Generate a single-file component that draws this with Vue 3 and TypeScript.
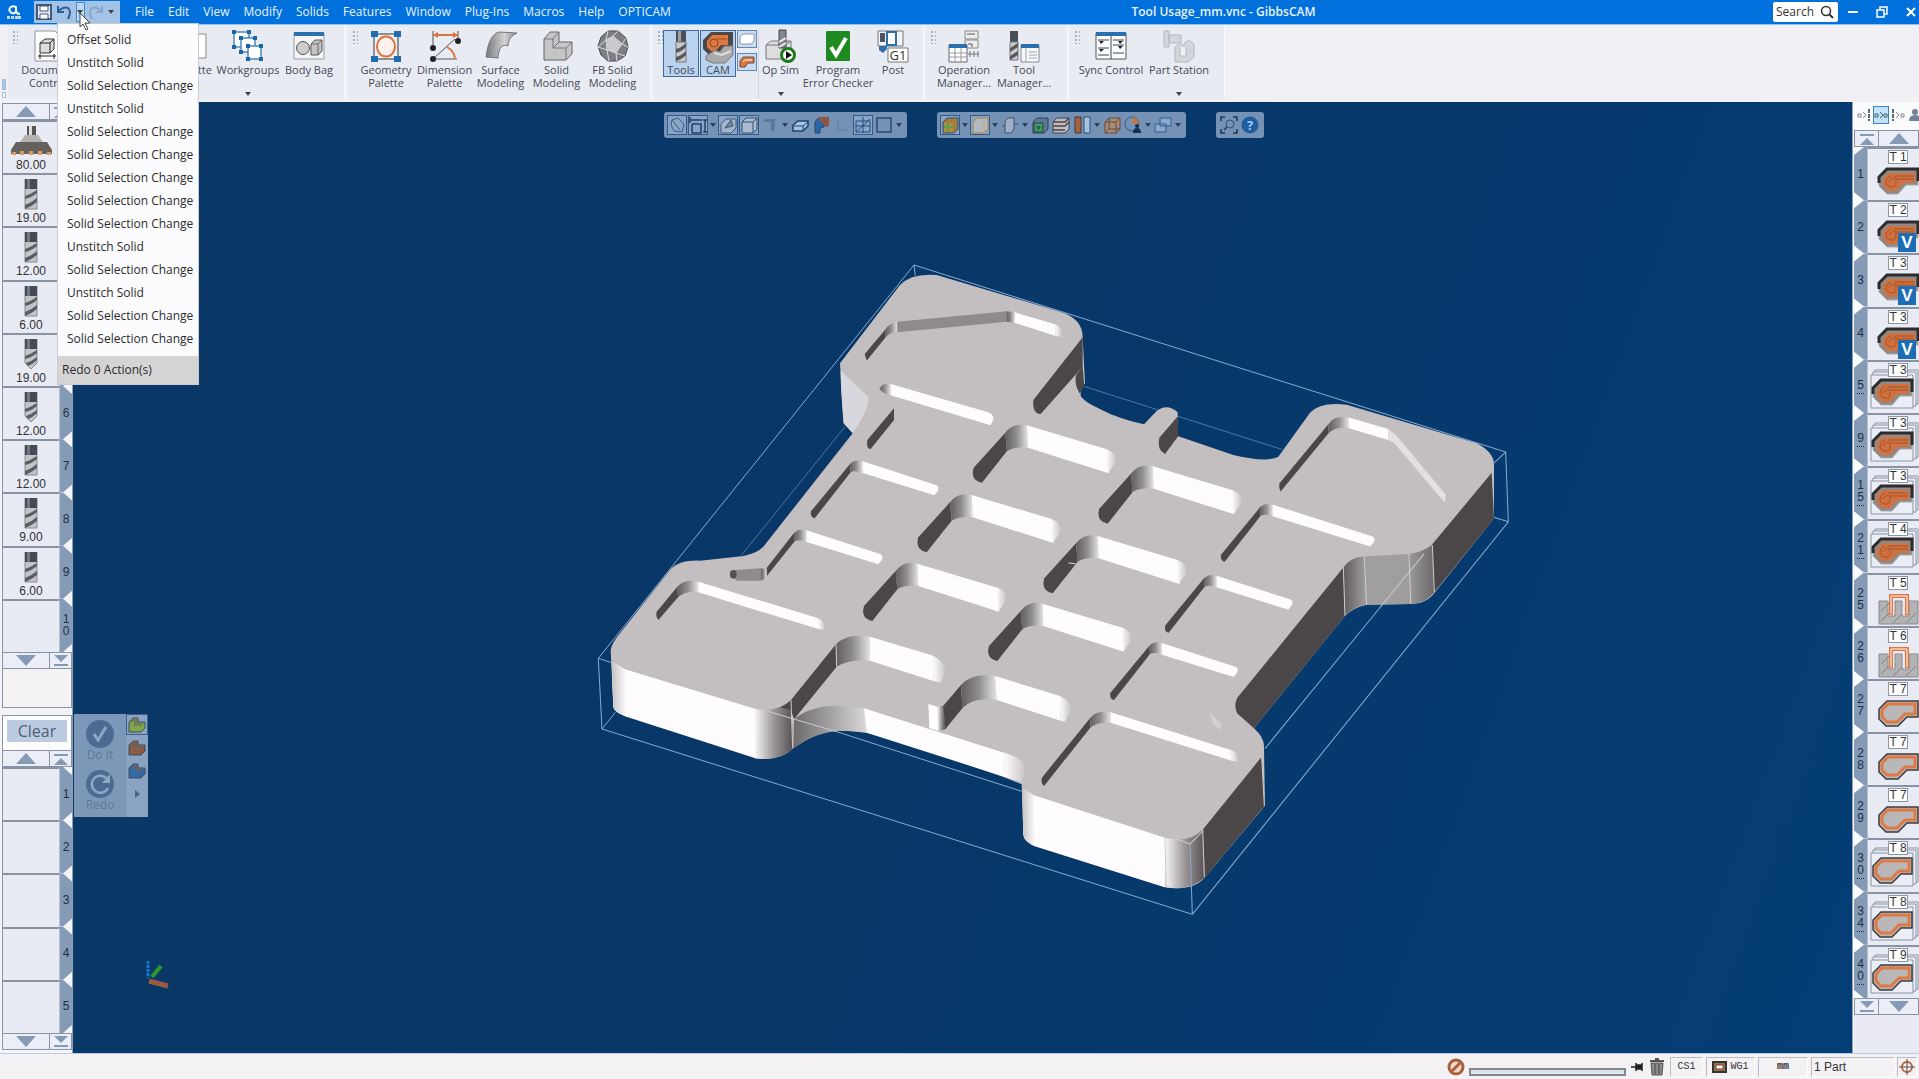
<script setup lang="ts">
import { ref } from 'vue'

interface RibbonItem { label: string; icon: string; width: number; drop?: boolean; active?: boolean; dim?: boolean }
interface Operation { num: string; tool: string; kind: 'pocket' | 'thread' | 'contour'; stacked?: boolean; badge?: boolean; more?: boolean }
interface MiniItem { icon: string; framed?: boolean; drop?: boolean }

const menus = ['File', 'Edit', 'View', 'Modify', 'Solids', 'Features', 'Window', 'Plug-Ins', 'Macros', 'Help', 'OPTICAM']
const U = 'Unstitch Solid'
const S = 'Solid Selection Change'
const history = ['Offset Solid', U, S, U, S, S, S, S, S, U, S, U, S, S]
const query = ref('')

const icons: Record<string, string> = {
  document: '<path d="M3 1h20l6 6v24H3z" fill="#fff" stroke="#8d9299"/><path d="M8 13l5-4h9v10l-4 4H8z" fill="#ddd" stroke="#333"/><path d="M8 13h10v10M18 13l4-4M6 26h18M8 24v5M22 24v5" fill="none" stroke="#222"/>',
  palette: '<path d="M2 4h26v24H2z" fill="#fff" stroke="#888"/>',
  workgroups: '<g fill="#fff" stroke="#4b89bd" stroke-width="1.5"><path d="M2 2h15v15H2z"/><path d="M9 8h14v14H9z"/><path d="M16 16h13v13H16z"/></g><g fill="#1c66a6"><path d="M0 0h4v4H0zM15 0h4v4h-4zM0 15h4v4H0zM7 6h4v4H7zM21 6h4v4h-4zM7 20h4v4H7zM14 14h4v4h-4zM27 14h4v4h-4zM14 27h4v4h-4zM27 27h4v4h-4z"/></g>',
  bag: '<path d="M1 3h30v26H1z" fill="#f5f5f7" stroke="#9a9ca2"/><path d="M1 2h30v4H1z" fill="#2a6fae"/><circle cx="10" cy="18" r="6.500" fill="#ccc" stroke="#555"/><path d="M18 14l4-4h7v11l-4 4h-7z" fill="#c4c4c6" stroke="#555"/><path d="M18 14h7v11M25 14l4-4" fill="none" stroke="#666"/>',
  geometry: '<path d="M4 4h24v25H4z" fill="#e9f1fa" stroke="#333"/><path d="M1 1h7v6H1zM24 1h7v6h-7zM1 26h7v6H1zM24 26h7v6h-7z" fill="#1f6cb0"/><ellipse cx="16" cy="16.500" rx="9" ry="10" fill="#fdf3ee" stroke="#e0713a" stroke-width="2"/>',
  dimension: '<path d="M4 1v14M29 1v8M4 29h24M4 29L26 9" fill="none" stroke="#555"/><path d="M4 5h25" stroke="#df733c" stroke-width="2"/><path d="M4 5l5-3v6zM29 5l-5-3v6z" fill="#df733c"/><path d="M18 17q7 4 8 11" fill="none" stroke="#df733c" stroke-width="2"/><g fill="#222"><circle cx="4" cy="18" r="3"/><circle cx="4" cy="29" r="3"/><circle cx="29" cy="11" r="3"/></g>',
  surface: '<path d="M1 27C3 12 7 4 14 2l18 1c-6 3-9 7-9 13-2-1-5-1-7 1-2 3-3 7-3 11z" fill="url(#metal)" stroke="#77787c"/>',
  solid: '<path d="M3 9l6-7h9v10h13v12l-6 6H3z" fill="#c5c5c7" stroke="#66676a"/><path d="M3 9h9v9h13v12M12 9l6-7M12 18l6-6M25 18l6-6" fill="none" stroke="#77787c"/>',
  facet: '<path d="M11 1h10l8 7 2 9-3 9-8 5h-9l-7-6-3-9 3-9z" fill="#7d7f83" stroke="#4a4b4d"/><path d="M11 1l-2 9-8 7 9 3 2 11M9 10l7-4 5-5M9 10l1 10 9 3 6-9-9-8M25 14l6 3M19 23l1 8M19 23l9 3M25 14l4-6" fill="none" stroke="#ddd"/><path d="M16 6l9 8-6 9-9-3-1-10z" fill="#c9cacd"/>',
  mill: '<path d="M11 0h10v11H11z" fill="#4a4f56"/><path d="M13 0h3v11h-3z" fill="#9da1a8"/><path d="M11 11h10v20H11z" fill="#c9c9cc" stroke="#777"/><path d="M11 18q5-1 10-6v4q-5 5-10 6zM11 26q5-1 10-6v4q-5 5-10 6z" fill="#55585d"/>',
  cam: '<path d="M1 9L9 1H31V17H21L14 24H7L1 18Z" fill="#4d4745"/><path d="M5 10L10 4H26V14H19L13 20H9L5 16Z" fill="#dc7840"/><circle cx="12" cy="12" r="4" fill="none" stroke="#8c4522"/><path d="M15 8H25" stroke="#9c5028"/><path d="M4 25l9-6 5 2 4-6h9v9l-8 8H11l-7-3z" fill="#a9a9ab" stroke="#77787a"/><path d="M12 22l8 2 9-4" fill="none" stroke="#dedede" stroke-width="2"/>',
  opsim: '<path d="M1 15l5-4h20v12l-6 6H1z" fill="#ddd" stroke="#777"/><path d="M1 15h19v14M20 15l6-4" fill="none" stroke="#777"/><path d="M14 0h7v18h-7z" fill="#85888d" stroke="#44474b"/><path d="M14 12l7-4M14 17l7-4" stroke="#eee" stroke-width="2"/><circle cx="23" cy="25" r="6.500" fill="#fff" stroke="#1d7a1d" stroke-width="3"/><path d="M21 21l6 4-6 4z" fill="#111"/>',
  check: '<path d="M5 2h22v28H5z" fill="#1f8a22" stroke="#1f8a22" stroke-width="2" stroke-linejoin="round"/><path d="M9 17l5 8L24 8" fill="none" stroke="#fff" stroke-width="4"/>',
  post: '<path d="M1 1h25v15H1z" fill="#f4f4f6" stroke="#777"/><path d="M3 3h5v9H3z" fill="#4a5665"/><path d="M10 2h9v13h-9z" fill="#fff" stroke="#2a6fae" stroke-width="2"/><path d="M2 16h8v3l-4 4-4-3z" fill="#2a6fae"/><path d="M11 18h20v14H11z" fill="#fff" stroke="#777"/><text x="21" y="30" text-anchor="middle" font-size="13" fill="#333">G1</text>',
  opman: '<path d="M17 1h13v8H17zM17 10h13v8H17z" fill="#eee" stroke="#888"/><path d="M19 4h8M20 14h4v3" fill="none" stroke="#555"/><path d="M1 15h18v17H1z" fill="#fff" stroke="#667"/><path d="M1 14h18v4H1z" fill="#2a6fae"/><path d="M1 23h18M1 27h18M7 18v14M13 18v14" stroke="#999"/><path d="M20 24h11M22 21v6M26 21v6M30 21v6" stroke="#777"/>',
  toolman: '<path d="M2 1h8v11H2z" fill="#4a4f56"/><path d="M2 12h8v18H2z" fill="#ccc" stroke="#777"/><path d="M2 18l8-5v4l-8 5zM2 26l8-5v4l-8 5z" fill="#55585d"/><path d="M13 15h18v17H13z" fill="#f7f7f9" stroke="#889"/><path d="M13 14h18v4H13z" fill="#2a6fae"/><path d="M18 18v14M21 22h8M21 25h8M21 28h8" stroke="#9aa"/>',
  sync: '<path d="M1 3h30v26H1z" fill="#fff" stroke="#555"/><path d="M1 2h30v4H1z" fill="#2a6fae"/><path d="M16 6v23M3 10h11M18 10h11M3 18h11M18 23h11M3 25h11M18 15h11" stroke="#345"/><path d="M4 11h5l-3 3zM23 11h5l-3 3zM4 19h5l-3 3zM23 16h5l-3 3z" fill="#223"/>',
  station: '<g fill="#d2d3d8" stroke="#b2b4ba"><path d="M1 1h5v16H1zM6 5h12v8H6z"/><path d="M12 17l5-4 4 3v-3l5-3 5 4v13l-6 5H12z"/></g><path d="M17 17v9h6v-9" fill="#f2f2f5" stroke="#b2b4ba"/>',
  save: '<path d="M1 1h14v14H1z" fill="#dfeaf6" stroke="#44597a" stroke-width="2"/><path d="M4 2h8v5H4zM4 10h8v5H4z" fill="#fff" stroke="#44597a"/>',
  undo: '<path d="M2 2v6h6M2 8q5-6 10-4 4 3 0 11" fill="none" stroke="#2d5f9b" stroke-width="2"/>',
  redo: '<path d="M14 2v6H8M14 8Q9 2 4 4q-4 3 0 11" fill="none" stroke="#8aa6c6" stroke-width="2"/>',
  wire: '<path d="M4 4l6-2 6 6-2 8-8-1-3-6z" fill="#8aa7c6" stroke="#3a5f8a"/><path d="M4 4l8 10" stroke="#3a5f8a"/>',
  size: '<path d="M1 4h12M1 1v6M3 8v9M3 8h9v9H3M16 4v12M14 4h4M14 16h4" fill="none" stroke="#1f3f66" stroke-width="1.500"/>',
  boxa: '<path d="M2 8l5-5h10v9l-5 5H2z" fill="#a3b5cb" stroke="#3e5672"/><path d="M6 12l6-8 2 6z" fill="#7188a5" stroke="#3e5672"/>',
  cube: '<path d="M2 6l4-4h11v11l-4 4H2z" fill="#a9bbd0" stroke="#34506f"/><path d="M2 6h11v11M13 6l4-4" fill="none" stroke="#34506f"/>',
  edge: '<path d="M3 4l3-1h8l-1 13-3-2V6H3z" fill="#5c7795"/>',
  plane: '<path d="M2 9l5-4h10v5l-5 5H2z" fill="#a7c3e2" stroke="#1d4470" stroke-width="1.500"/><path d="M2 10h10l5-4M12 10v5" fill="none" stroke="#1d4470"/>',
  curve: '<path d="M3 17V7q1-5 6-5h3v9l-4 1v5z" fill="#2766a8" stroke="#24486f"/><path d="M7 1h10v9l-4 1-2-4-4-2z" fill="#8f5541"/>',
  angle: '<path d="M5 3v11h9" fill="none" stroke="#58789d"/>',
  grid: '<path d="M2 5h14v11H2z" fill="none" stroke="#1f4a7b"/><path d="M2 16L16 3M9 1v16M2 10h14" stroke="#1f4a7b"/>',
  frame: '<path d="M2 2h14v14H2z" fill="none" stroke="#2b4a70" stroke-width="1.500"/>',
  render: '<path d="M2 6l4-4h11v11l-4 4H2z" fill="#a27d3e" stroke="#33506f"/><path d="M3 7h9v9H3z" fill="#b38b48"/><path d="M7 7v9M3 11h9" stroke="#5da040" stroke-width="2"/>',
  pale: '<path d="M2 6l4-4h11v11l-4 4H2z" fill="#b2bac2" stroke="#b0906a" stroke-width="1.500"/><path d="M13 6v11" stroke="#c8a26f"/>',
  cyl: '<path d="M4 5l3-3h6v11l-3 4H4z" fill="#9eb0c6" stroke="#3d5370"/><path d="M1 10h3M13 8h4" stroke="#3d5370"/>',
  green: '<path d="M2 6l4-4h11v11l-4 4H2z" fill="#5d7892" stroke="#24405f"/><path d="M3 7h9v9H3z" fill="#42a04a" stroke="#24405f"/><circle cx="7.500" cy="11.500" r="2" fill="#2d5b80"/>',
  layers: '<path d="M1 6l4-4h12v11l-4 4H1z" fill="#b9bdc5" stroke="#34465c"/><path d="M1 6h12l4-4M1 10h12l4-4M1 14h12" stroke="#5a4038" stroke-width="1.500" fill="none"/>',
  split: '<path d="M2 1h6v16H2z" fill="#a8623e" stroke="#3f3a40"/><path d="M11 1h6v16h-6z" fill="#a7c2de" stroke="#2c5078"/>',
  wirebox: '<path d="M2 6l4-4h11v11l-4 4H2zM2 6h11v11M13 6l4-4M6 2v11h11M2 17l4-4" fill="#a98a72" stroke="#6a4c3c"/>',
  pie: '<circle cx="8" cy="8" r="7" fill="#6f93bb" stroke="#48566a"/><path d="M8 8V1a7 7 0 0 1 7 7z" fill="#b87a4e"/><circle cx="13" cy="10" r="2" fill="#15304f"/><path d="M9 17q0-5 4-5t4 5z" fill="#15304f"/>',
  windows: '<path d="M6 2h11v8H6zM1 8h11v8H1z" fill="#8ba9cb" stroke="#2d5d92"/>',
  fit: '<path d="M1 5V1h4M13 1h4v4M17 13v4h-4M5 17H1v-4" fill="none" stroke="#1d3654" stroke-width="1.500"/><circle cx="10" cy="8" r="4" fill="none" stroke="#34506f"/><path d="M7 11l-3 3" stroke="#34506f" stroke-width="2"/>',
  help: '<circle cx="9" cy="9" r="8.500" fill="#1c5c9f"/><text x="9" y="14" text-anchor="middle" font-size="13" font-weight="bold" fill="#a9cdf2">?</text>',
  facemill: '<path d="M16 0h9v9h-9z" fill="#555"/><path d="M18 0h3v9h-3z" fill="#ddd"/><path d="M14 9h13l5 7H9z" fill="#b5b3b2"/><path d="M5 16h31l5 8v4H0v-4z" fill="#66615f"/><path d="M1 26h4v3H1zM9 25h4v4H9zM18 25h4v4h-4zM27 25h4v4h-4zM36 26h4v3h-4z" fill="#d89b62"/>',
}

const groups: { lead: number; width: number; items: RibbonItem[] }[] = [
  { lead: 8, width: 337, items: [
    { label: 'Document Control', icon: 'document', width: 64 }, { label: '', icon: 'palette', width: 93 },
    { label: 'Palette', icon: 'palette', width: 38 }, { label: 'Workgroups', icon: 'workgroups', width: 68, drop: true }, { label: 'Body Bag', icon: 'bag', width: 52 } ] },
  { lead: 8, width: 303, items: [
    { label: 'Geometry Palette', icon: 'geometry', width: 60 }, { label: 'Dimension Palette', icon: 'dimension', width: 55 },
    { label: 'Surface Modeling', icon: 'surface', width: 55 }, { label: 'Solid Modeling', icon: 'solid', width: 55 }, { label: 'FB Solid Modeling', icon: 'facet', width: 55 } ] },
  { lead: 10, width: 271, items: [
    { label: 'Tools', icon: 'mill', width: 36, active: true }, { label: 'CAM', icon: 'cam', width: 36, active: true },
    { label: 'Op Sim', icon: 'opsim', width: 43, drop: true }, { label: 'Program\nError Checker', icon: 'check', width: 70 }, { label: 'Post', icon: 'post', width: 38 } ] },
  { lead: 6, width: 142, items: [
    { label: 'Operation Manager...', icon: 'opman', width: 64 }, { label: 'Tool Manager...', icon: 'toolman', width: 54 } ] },
  { lead: 6, width: 155, items: [
    { label: 'Sync Control', icon: 'sync', width: 70 }, { label: 'Part Station', icon: 'station', width: 64, drop: true, dim: true } ] },
]

const bars: MiniItem[][] = [
  [{ icon: 'wire', framed: true }, { icon: 'size', framed: true, drop: true }, { icon: 'boxa', framed: true }, { icon: 'cube', framed: true }, { icon: 'edge', drop: true },
    { icon: 'plane' }, { icon: 'curve' }, { icon: 'angle' }, { icon: 'grid', framed: true }, { icon: 'frame', drop: true }],
  [{ icon: 'render', framed: true, drop: true }, { icon: 'pale', framed: true, drop: true }, { icon: 'cyl', drop: true }, { icon: 'green' }, { icon: 'layers' },
    { icon: 'split', drop: true }, { icon: 'wirebox' }, { icon: 'pie', drop: true }, { icon: 'windows', drop: true }],
  [{ icon: 'fit' }, { icon: 'help' }],
]

const tools = ['80.00', '19.00', '12.00', '6.00', '19.00', '12.00', '12.00', '9.00', '6.00', '']
const ops: Operation[] = [
  { num: '1', tool: 'T 1', kind: 'pocket' },
  { num: '2', tool: 'T 2', kind: 'pocket', badge: true },
  { num: '3', tool: 'T 3', kind: 'pocket', badge: true },
  { num: '4', tool: 'T 3', kind: 'pocket', badge: true },
  { num: '5', tool: 'T 3', kind: 'pocket', stacked: true, more: true },
  { num: '9', tool: 'T 3', kind: 'pocket', stacked: true, more: true },
  { num: '15', tool: 'T 3', kind: 'pocket', stacked: true, more: true },
  { num: '21', tool: 'T 4', kind: 'pocket', stacked: true, more: true },
  { num: '25', tool: 'T 5', kind: 'thread' },
  { num: '26', tool: 'T 6', kind: 'thread' },
  { num: '27', tool: 'T 7', kind: 'contour' },
  { num: '28', tool: 'T 7', kind: 'contour' },
  { num: '29', tool: 'T 7', kind: 'contour' },
  { num: '30', tool: 'T 8', kind: 'contour', stacked: true, more: true },
  { num: '34', tool: 'T 8', kind: 'contour', stacked: true, more: true },
  { num: '40', tool: 'T 9', kind: 'contour', stacked: true, more: true },
]

const bigPockets = [[1246, 548], [1080, 757], [917, 963], [1623, 671], [1458, 880], [1292, 1083]]
const slimPockets = [[780, 642, 0], [612, 849, 0], [1842, 985, 0], [1678, 1187, 0], [2010, 772, 78]]
</script>

<template>
  <div class="app">
    <header class="titlebar">
      <svg class="logo" viewBox="0 0 16 16"><path d="M10 6V3Q6 1 4 4t2 5q4 1 4-3 0 4 4 4" fill="none" stroke="#fff" stroke-width="2" /><path d="M1 12h3v3H1zM5 12h3v3H5zM9 12h6v3H9z" fill="#bcd8f5" /></svg>
      <div class="quick">
        <button aria-label="Save"><svg viewBox="0 0 16 16" v-html="icons.save" /></button>
        <button aria-label="Undo"><svg viewBox="0 0 16 16" v-html="icons.undo" /></button>
        <button class="split" aria-label="Undo history"><i class="caret" /></button>
        <button aria-label="Redo"><svg viewBox="0 0 16 16" v-html="icons.redo" /></button>
        <button class="more" aria-label="Customize"><i class="caret" /></button>
      </div>
      <nav class="menus"><button v-for="m in menus" :key="m">{{ m }}</button></nav>
      <h1>Tool Usage_mm.vnc - GibbsCAM</h1>
      <label class="search">
        <input v-model="query" type="text" placeholder="Search" aria-label="Search" />
        <svg viewBox="0 0 14 14"><circle cx="6" cy="6" r="4.500" fill="none" stroke="#333" stroke-width="1.500" /><path d="M9 9l4 4" stroke="#333" stroke-width="2" /></svg>
      </label>
      <div class="winbtns">
        <button aria-label="Minimize"><svg viewBox="0 0 12 12"><path d="M1 6h10" stroke="#fff" stroke-width="2" /></svg></button>
        <button aria-label="Restore"><svg viewBox="0 0 12 12"><path d="M4 4V1h7v7H8M1 4h7v7H1z" fill="none" stroke="#fff" stroke-width="1.500" /></svg></button>
        <button aria-label="Close"><svg viewBox="0 0 12 12"><path d="M2 2l8 8M10 2l-8 8" stroke="#fff" stroke-width="2" /></svg></button>
      </div>
    </header>

    <section class="ribbon">
      <div class="edge"><span /><span /></div>
      <div v-for="(g, gi) in groups" :key="gi" class="group" :style="{ width: g.width + 'px', paddingLeft: g.lead + 'px' }">
        <i class="grip" />
        <template v-for="it in g.items" :key="it.label + it.width">
          <div v-if="it.label === 'Op Sim'" class="pair">
            <button aria-label="Part"><svg viewBox="0 0 18 14"><path d="M2 5l3-3h11v7l-3 3H2z" fill="#fff" stroke="#8d96a5" /></svg></button>
            <button aria-label="Process"><svg viewBox="0 0 18 14"><path d="M2 6l3-4h11v6h-6l-3 4H2z" fill="#dd7940" stroke="#6d4a3a" /><path d="M5 7l2-2h7" fill="none" stroke="#fff" /></svg></button>
          </div>
          <button class="item" :class="{ active: it.active, dim: it.dim }" :style="{ width: it.width + 'px' }">
            <svg viewBox="0 0 32 32" v-html="icons[it.icon]" />
            <span>{{ it.label }}</span>
            <i v-if="it.drop" class="caret" />
          </button>
        </template>
      </div>
    </section>

    <main class="work">
      <aside class="left">
        <div class="nav"><button aria-label="Up"><i class="tri up" /></button><button class="end" aria-label="First"><i class="tri up capped" /></button></div>
        <div class="tiles ten">
          <button v-for="(t, i) in tools" :key="i" class="tile">
            <span class="face">
              <svg v-if="i === 0" class="fm" viewBox="0 0 41 30" v-html="icons.facemill" />
              <svg v-else-if="t" class="tl" viewBox="0 0 16 31">
                <path v-if="i === 4 || i === 5" d="M2 0h12v24l-6 6-6-6z" fill="#c3c4c7" stroke="#8a8c90" />
                <path v-else d="M2 0h12v30H2z" fill="#c3c4c7" stroke="#8a8c90" />
                <path d="M2 0h12v10H2z" fill="#454b54" /><path d="M4 0h3v10H4z" fill="#737982" />
                <path d="M2 17q6-2 12-6v3q-6 5-12 6z" fill="#5a5d62" />
                <path v-if="i === 4 || i === 5" d="M3 24q6-2 11-6v3q-4 4-9 6z" fill="#5a5d62" />
                <path v-else d="M2 26q6-2 12-7v4q-6 5-12 7z" fill="#5a5d62" />
              </svg>
              <em>{{ t }}</em>
            </span>
            <span class="num"><b>{{ i + 1 }}</b></span>
          </button>
        </div>
        <div class="nav"><button aria-label="Down"><i class="tri down" /></button><button class="end" aria-label="Last"><i class="tri down capped" /></button></div>
        <div class="blank" />
        <div class="clear"><button>Clear</button></div>
        <div class="nav"><button aria-label="Up"><i class="tri up" /></button><button class="end" aria-label="First"><i class="tri up capped" /></button></div>
        <div class="tiles five">
          <button v-for="n in 5" :key="n" class="tile"><span class="face" /><span class="num"><b>{{ n }}</b></span></button>
        </div>
        <div class="nav"><button aria-label="Down"><i class="tri down" /></button><button class="end" aria-label="Last"><i class="tri down capped" /></button></div>
      </aside>

      <section class="viewport">
        <svg class="scene" viewBox="73 102 1779 951">
          <defs>
            <linearGradient id="metal"><stop offset="0" stop-color="#77787b" /><stop offset=".6" stop-color="#d2d2d4" /><stop offset="1" stop-color="#8b8c8f" /></linearGradient>
            <linearGradient id="fillet"><stop offset="0" stop-color="#625e5f" /><stop offset=".5" stop-color="#918e8f" /><stop offset="1" stop-color="#e4e2e3" /></linearGradient>
            <linearGradient id="round"><stop offset="0" stop-color="#fbf9fa" /><stop offset=".5" stop-color="#9b9798" /><stop offset="1" stop-color="#555152" /></linearGradient>
            <linearGradient id="pale"><stop offset="0" stop-color="#c5c1c2" /><stop offset="1" stop-color="#fefcfd" /></linearGradient>
            <linearGradient id="paleEnd"><stop offset="0" stop-color="#fefcfd" /><stop offset="1" stop-color="#c8c4c5" /></linearGradient>
            <linearGradient id="wave"><stop offset="0" stop-color="#5f5b5c" /><stop offset=".25" stop-color="#a19e9f" /><stop offset=".7" stop-color="#a09d9e" /><stop offset="1" stop-color="#6b6768" /></linearGradient>
            <linearGradient id="sweep"><stop offset="0" stop-color="#6d6a6b" /><stop offset="1" stop-color="#dad7d8" /></linearGradient>
          </defs>

          <g transform="translate(590 250) scale(.333333)">
            <path class="box" d="M972 45L2747 606M972 45l4 32M972 45L25 1225l11 212L1807 1993M36 1437l40-50" />
            <path class="box faint" d="M765 530L455 915M1485 410L2075 598" />
            <path class="top" d="M930 105Q965 68 1040 75L1410 185Q1478 205 1478 262L1485 400Q1465 420 1475 450L1560 492V1560H1250L830 1448 740 1440Q680 1445 610 1495 570 1535 495 1525L110 1400Q70 1385 70 1370L62 1200Q65 1180 90 1150L240 960Q265 930 330 932L460 918Q500 910 520 890L788 550 760 520 750 340Z" />
          </g>
          <g transform="translate(1000 370) scale(.333333 .357143)">
            <path class="top" d="M200-30L235 30 240 70C255 95 330 130 432 152L470 115Q500 92 533 118V185L700 238Q800 260 835 243L930 120Q960 88 1040 97L1430 205Q1482 230 1482 265V415L1305 622Q1280 655 1230 655L1100 657Q1060 665 1035 688L762 1003Q795 1030 792 1060L795 1220 615 1420Q580 1460 495 1448L110 1335Q70 1320 70 1300L65 1160 0 1136-400 1010-490 900V500L0-50Z" />
          </g>

          <g transform="translate(590 250) scale(.333333)">
            <path d="M752 362L835 440Q838 480 788 548L762 518Q752 430 752 362Z" fill="#d8d7de" />
            <path class="dark" d="M1478 262V350L1352 492Q1326 490 1330 450ZM1478 350L1483 412 1468 430Q1452 400 1458 375Z" />
            <path class="dark" d="M885 240L887 262 830 332 824 312ZM912 475V510L842 597Q828 597 832 570Z" />
            <path d="M885 240Q895 220 922 215V247Q900 246 887 262Z" fill="url(#fillet)" />
            <path d="M922 215L1250 184V215L922 247Z" fill="#8e8b8c" />
            <path d="M1250 184L1275 187V219L1250 215Z" fill="url(#fillet)" />
            <path class="white" d="M1275 187L1395 223 1397 258 1275 219Z" />
            <path d="M1395 223Q1420 232 1416 262L1397 258Z" fill="url(#paleEnd)" />
            <path d="M868 416Q880 395 902 402V434Q880 432 868 416Z" fill="url(#fillet)" />
            <path class="white" d="M902 402L1195 487Q1212 495 1210 508L1202 526 902 436Z" />

            <g v-for="(p, i) in bigPockets" :key="'b' + i" :transform="`translate(${p[0]} ${p[1]})`">
              <path class="dark" d="M0 0L-95 105Q-106 142-70 150L5 55Z" />
              <path d="M0 0Q25-32 65-22L68 45Q30 40 5 55Z" fill="url(#fillet)" />
              <path class="white" d="M65-22L305 50 310 122 68 45Z" />
              <path d="M302 49Q335 60 332 88L308 122Z" fill="url(#paleEnd)" />
            </g>
            <g v-for="(p, i) in slimPockets" :key="'s' + i" :transform="`translate(${p[0]} ${p[1]})`">
              <path v-if="i !== 1" class="dark" d="M0 0L-117 142Q-120 160-106 163L2 25Z" />
              <path v-else class="dark" d="M0 0L-82 105V130L2 25Z" />
              <path d="M0 0Q15-15 38-8V27Q15 18 2 25Z" fill="url(#fillet)" />
              <path class="white" :d="`M38-8L${258 + p[2]} ${63 + p[2] * 0.3}q12 5 5 18l-10 13L38 27Z`" />
            </g>
            <path d="M420 972Q422 960 440 960L512 955V992L440 992Z" fill="#8f8c8d" /><path d="M512 955L530 958V985L512 992Z" fill="url(#fillet)" />
            <ellipse cx="430" cy="973" rx="10" ry="13" fill="#555152" />

            <path class="dark" d="M262 1010L264 1042 205 1110Q196 1098 200 1085Z" />
            <path d="M262 1010Q285 985 325 995V1027Q285 1022 264 1042Z" fill="url(#fillet)" />
            <path class="white" d="M325 995L685 1105 688 1138 325 1027Z" />
            <path d="M685 1105Q705 1115 705 1140L688 1138Z" fill="url(#paleEnd)" />

            <path class="white" d="M65 1235L105 1258 500 1378V1525L110 1400Q70 1385 70 1370Z" />
            <path d="M65 1235L105 1258 110 1400Q70 1385 70 1370Z" fill="url(#pale)" />
            <path d="M492 1376Q560 1390 603 1350L610 1495Q570 1535 495 1525Z" fill="url(#round)" />
            <path class="dark" d="M570 1372Q590 1365 603 1350L738 1183 740 1250 612 1408 603 1380Z" />
            <path d="M738 1183Q770 1148 840 1160V1232Q780 1225 740 1250Z" fill="url(#fillet)" />
            <path class="white" d="M840 1160L1030 1217V1293L840 1232Z" />
            <path d="M1030 1217Q1065 1235 1067 1270L1050 1298 1030 1293Z" fill="url(#paleEnd)" />
            <path d="M612 1408Q680 1350 822 1375L830 1448Q700 1425 610 1495Z" fill="url(#sweep)" />
            <path class="white" d="M822 1375L1242 1508 1245 1581 830 1448Z" />
            <path d="M1242 1508Q1300 1525 1307 1555L1295 1597 1245 1581Z" fill="url(#paleEnd)" />
            <path class="top" d="M1000 1370L1240 1380V1470L1060 1442 1018 1432Z" />
            <path class="white" d="M1015 1362L1042 1370 1045 1442 1018 1435Z" />
            <path d="M1042 1370L1062 1367 1066 1438 1045 1444Z" fill="url(#round)" />
            <path class="dark" d="M1060 1367L1113 1305 1117 1375 1066 1438Z" />
            <path d="M1113 1305Q1145 1268 1215 1278L1220 1350Q1150 1340 1117 1375Z" fill="url(#fillet)" />
            <path class="white" d="M1215 1278L1410 1338 1412 1412 1220 1350Z" />
            <path d="M1410 1338Q1445 1355 1443 1380L1425 1416 1412 1412Z" fill="url(#paleEnd)" />
            <path class="ridge" d="M603 1350L608 1495M530 1383L740 1445M738 1183L740 1250" />
            <path class="box" d="M25 1225L65 1238M740 1445L1295 1624" />
          </g>

          <g transform="translate(1000 370) scale(.333333 .357143)">
            <path class="dark" d="M533 130L535 185 495 235Q470 225 478 190Z" />
            <path class="dark" d="M985 152V178L842 340Q836 330 838 318Z" />
            <path d="M985 152Q1005 125 1047 133V163Q1005 158 985 178Z" fill="url(#fillet)" />
            <path class="white" d="M1047 133L1165 165V196L1047 163Z" />
            <path d="M1165 165L1188 182 1338 350 1334 372 1182 204 1165 196Z" fill="#e3e0e2" />
            <path class="dark" d="M270 975L272 1000 132 1165Q120 1155 127 1140Z" />
            <path d="M270 975Q290 950 332 958V988Q295 985 272 1000Z" fill="url(#fillet)" />
            <path class="white" d="M332 958L690 1063 695 1094 332 988Z" />
            <path d="M690 1063Q718 1070 715 1098L695 1094Z" fill="url(#paleEnd)" />
            <path d="M628 958L665 992 660 1008 638 992Z" fill="#d3cfd1" />

            <path class="dark" d="M1030 553L1035 688 762 1003 712 962Q700 940 712 918Z" />
            <path d="M1030 553Q1050 525 1090 522L1225 515Q1270 510 1295 490L1303 622Q1275 655 1230 655L1100 657Q1060 662 1035 688Z" fill="url(#wave)" />
            <path class="dark" d="M1295 490L1475 288 1482 415 1303 622Z" />
            <path class="white" d="M68 1172L100 1190 495 1310V1448L110 1335Q70 1320 70 1300Z" />
            <path d="M66 1170L100 1190 106 1335Q70 1320 70 1300Z" fill="url(#pale)" />
            <path d="M493 1310Q570 1325 608 1287L615 1420Q570 1460 498 1448Z" fill="url(#round)" />
            <path class="dark" d="M608 1287L785 1083 794 1220 615 1420Z" />
            <path class="ridge" d="M1030 553L1035 688M1093 522L1100 657M1227 515L1232 655M1297 490L1303 622M608 1287L613 1420M495 1310L499 1448M785 1083L793 1220M206 540L228 543" />
            <path class="box" d="M577 1524L1525 425 1517 230 1480 262M570 1325L577 1524M795 1060L1140 665M1482 412L1525 425" />
            <path class="ridge" d="M1140 665L1272 515M530 1313L570 1327 610 1290" />
          </g>

          <path d="M148 961v17" stroke="#1674d2" stroke-width="3" stroke-dasharray="3 1" /><path d="M152 977l9-11" stroke="#2a9a2c" stroke-width="4" /><path d="M149 981l19 5" stroke="#9a5a44" stroke-width="5" />
        </svg>

        <div class="bars">
          <div v-for="(bar, bi) in bars" :key="bi" class="bar">
            <template v-for="b in bar" :key="b.icon">
              <button class="mini" :class="{ framed: b.framed }" :aria-label="b.icon"><svg viewBox="0 0 18 18" v-html="icons[b.icon]" /></button>
              <i v-if="b.drop" class="caret" />
            </template>
          </div>
        </div>

        <div class="doit">
          <div class="acts">
            <button><svg viewBox="0 0 28 28"><circle cx="14" cy="14" r="14" fill="#4d6b91" /><path d="M8 14l4 6 8-13" fill="none" stroke="#8fa8c6" stroke-width="3" /></svg>Do It</button>
            <button><svg viewBox="0 0 28 28"><circle cx="14" cy="14" r="14" fill="#4d6b91" /><path d="M21 9a8.500 8.500 0 1 0 1 9" fill="none" stroke="#8fa8c6" stroke-width="2.500" /><path d="M24 4v9h-8z" fill="#8fa8c6" /></svg>Redo</button>
          </div>
          <div class="opts">
            <button v-for="(c, i) in ['#7fa648', '#8a5a42', '#3469a8']" :key="c" :class="{ on: i === 0 }" :aria-label="'Mode ' + (i + 1)">
              <svg viewBox="0 0 18 16"><path d="M1 5l4-4h5v4h7v6l-4 4H1z" :fill="c" stroke="#3d4a5c" /><path d="M1 5l4-4h5v4h7l-4 4H6V5z" fill="#676563" fill-opacity=".6" /></svg>
            </button>
            <button aria-label="More"><svg viewBox="0 0 18 16"><path d="M7 4l5 4-5 4z" fill="#47648a" /></svg></button>
          </div>
        </div>
      </section>

      <aside class="right">
        <div class="modes">
          <button aria-label="Before"><svg viewBox="0 0 14 14"><path d="M1 6h3v3H1zM6 4l3 3-3 3" fill="none" stroke="#889" /><path d="M12 1v12" stroke="#667" stroke-width="2" stroke-dasharray="4 1" /></svg></button>
          <button class="on" aria-label="Between"><svg viewBox="0 0 14 14"><path d="M1 6h3v3H1zM6 4l3 3-3 3M10 6h3v3h-3z" fill="none" stroke="#367" /></svg></button>
          <button aria-label="After"><svg viewBox="0 0 14 14"><path d="M5 4l3 3-3 3M10 6h3v3h-3z" fill="none" stroke="#889" /><path d="M2 1v12" stroke="#667" stroke-width="2" stroke-dasharray="4 1" /></svg></button>
          <button aria-label="Operator"><svg viewBox="0 0 14 14"><circle cx="8" cy="4" r="3" fill="#71849c" /><path d="M2 13q0-6 6-6t6 6z" fill="#71849c" /></svg></button>
        </div>
        <div class="nav"><button class="end" aria-label="First"><i class="tri up capped" /></button><button aria-label="Up"><i class="tri up" /></button></div>
        <div class="tiles">
          <button v-for="o in ops" :key="o.num" class="tile">
            <span class="num"><b>{{ o.num }}</b><u v-if="o.more" /></span>
            <span class="face">
              <svg class="op" viewBox="2 1 53 50">
                <g v-if="o.stacked" fill="#eceef7" stroke="#8a93a3"><path d="M9 9h43v34H9z" /><path d="M7 11h43v34H7z" /><path d="M5 14h42v33H5z" /></g>
                <g :transform="o.stacked ? 'translate(6 18)' : 'translate(12 20)'">
                  <template v-if="o.kind === 'pocket'">
                    <path d="M9 1H40V17H28L20 26H9L1 18V9Z" fill="#8d8a8a" stroke="#aaa" />
                    <path d="M1 15V9L9 1H40V13" fill="none" stroke="#2d2b2c" stroke-width="3" />
                    <path d="M11 5H37V15H26L18 23H10L5 18V10Z" fill="#d0713f" />
                    <path d="M13 8Q8 10 8 14T13 19 18 14 14 11 11 14M16 8H36M18 11H36" fill="none" stroke="#9c5530" />
                  </template>
                  <template v-else-if="o.kind === 'thread'">
                    <path d="M1 7h9v15h7V7h7v15h7V7h9v23H1z" fill="#b3b3b6" stroke="#8a8a8e" /><path d="M3 17l8-8M3 27l8-8M15 29l9-9M28 29l10-10" stroke="#808084" />
                    <path d="M13 21V2H29V21" fill="none" stroke="#e0763c" stroke-width="4" /><path d="M13 20V2H29V20" fill="none" stroke="#fff" />
                  </template>
                  <template v-else>
                    <path d="M9 1H40V17H29L20 26H8L1 19V9Z" fill="#b9b7b7" stroke="#3c3c40" stroke-width="1.500" />
                    <path d="M10 4H37V14H27L19 22H9L4 17V10Z" fill="none" stroke="#dd7a46" stroke-width="3" />
                  </template>
                </g>
                <g v-if="o.badge"><path d="M32 32h18v19H32z" fill="#1c6db4" /><text x="41" y="47" text-anchor="middle" font-size="17" font-weight="bold" fill="#fff">V</text></g>
              </svg>
              <strong>{{ o.tool }}</strong>
            </span>
          </button>
        </div>
        <div class="nav"><button class="end" aria-label="Last"><i class="tri down capped" /></button><button aria-label="Down"><i class="tri down" /></button></div>
        <div class="tail" />
      </aside>
    </main>

    <footer class="status">
      <svg class="stop" viewBox="0 0 18 18"><circle cx="9" cy="9" r="7" fill="#f0d8ca" stroke="#a8623e" stroke-width="3" /><path d="M4 14L14 4" stroke="#a8623e" stroke-width="3" /></svg>
      <div class="progress" role="progressbar" aria-label="Progress" />
      <svg class="pin" viewBox="0 0 12 10"><path d="M0 5h5M5 1v8M5 3h5v4H5M11 1v8" fill="#222" stroke="#222" stroke-width="1.500" /></svg>
      <svg class="trash" viewBox="0 0 14 18"><path d="M0 3h14M5 1h4" stroke="#555" stroke-width="2" /><path d="M1 5h12l-1 12H2z" fill="#8d8a8a" stroke="#555" /><path d="M5 6v10M9 6v10" stroke="#444" /></svg>
      <span class="cell cs">CS1</span>
      <span class="cell wg"><svg viewBox="0 0 15 12"><path d="M1 1h13v10H1z" fill="#8c7a4e" stroke="#333" stroke-width="2" /><path d="M4 4h7v4H4z" fill="#fff" stroke="#933" /></svg>WG1</span>
      <span class="cell mm">mm</span>
      <span class="cell part">1 Part</span>
      <span class="cell aim"><svg viewBox="0 0 16 16"><circle cx="8" cy="8" r="5" fill="none" stroke="#b3683f" stroke-width="2" /><path d="M8 0v16M0 8h16" stroke="#555" /></svg></span>
    </footer>

    <div class="history">
      <ul><li v-for="(h, i) in history" :key="i"><button>{{ h }}</button></li></ul>
      <p>Redo 0 Action(s)</p>
    </div>
    <svg class="cursor" viewBox="0 0 12 19"><path d="M1 1v14l3-3 3 6 2-1-3-6h5z" fill="#fff" stroke="#444" /></svg>
  </div>
</template>

<style>
body { margin: 0; background: #f2f1f5; }
</style>

<style scoped>
* { box-sizing: border-box; }
.app { position: relative; display: flex; flex-direction: column; height: 100vh; min-height: 960px; overflow: hidden; font: 12px/16px "Open Sans", "Noto Sans", sans-serif; color: #333; }
button { margin: 0; padding: 0; border: 0; background: none; font: inherit; color: inherit; }
svg { display: block; }
.caret { display: block; flex: none; width: 0; height: 0; border: 3px solid transparent; border-top: 4px solid #444; border-bottom: 0; }

.titlebar { position: relative; flex: none; display: flex; align-items: center; height: 25px; padding-left: 6px; background: #0070dc; border-bottom: 1px solid #8cc4f5; color: #e9f3ff; }
.logo { width: 16px; height: 16px; margin-right: 12px; }
.quick { display: flex; align-items: center; width: 86px; height: 22px; padding-left: 2px; background: #a3c3e6; }
.quick svg { width: 16px; height: 16px; }
.quick button { margin-right: 4px; }
.quick .split { width: 9px; height: 20px; margin: 0 3px 0 0; border: 1px solid #4c86c4; background: #b9d6f4; }
.quick .more { margin: 0; }
.menus { display: flex; gap: 14px; margin-left: 15px; font-size: 12px; }
.titlebar h1 { position: absolute; left: 50%; width: 528px; margin: 0; text-align: center; font-size: 12px; line-height: 16px; font-weight: 600; }
.search { display: flex; align-items: center; width: 65px; height: 20px; margin-left: auto; padding: 0 4px 0 3px; background: #fff; border-radius: 2px; }
.search input { flex: 1; min-width: 0; padding: 0; border: 0; outline: 0; font: inherit; color: #333; }
.search input::placeholder { color: #333; opacity: 1; }
.search svg { width: 14px; height: 14px; }
.winbtns { display: flex; gap: 17px; margin: 0 2px 0 9px; }
.winbtns svg { width: 12px; height: 12px; }

.ribbon { flex: none; display: flex; height: 77px; background: #f1f1f5; font-size: 11px; line-height: 13px; color: #444a55; }
.edge { display: flex; flex-direction: column; justify-content: flex-end; gap: 2px; width: 8px; padding: 0 2px 4px; }
.edge span { height: 6px; border: 1px solid #9fc0e2; background: #fff; }
.edge span:first-child { height: 11px; background: #a9c8ea; }
.group { position: relative; flex: none; display: flex; align-items: flex-start; height: 74px; margin-right: 3px; padding-top: 5px; background: #e9ebf3; border-right: 1px solid #fafafc; }
.group + .group { margin-right: 2px; }
.grip { position: absolute; left: 4px; top: 5px; width: 6px; height: 14px; background: radial-gradient(circle, #aab0bc 1px, transparent 1px) 0 0 / 4px 4px; }
.item { position: relative; flex: none; height: 47px; margin-right: 1px; text-align: center; }
.item svg { width: 32px; height: 32px; margin: 0 auto; overflow: visible; }
.item span { display: block; height: 26px; margin: 1px -5px 0; white-space: pre-line; }
.item .caret { position: absolute; left: 50%; top: 62px; margin-left: -3px; }
.item.active { border: 1px solid #3f6a9c; background: #b9d3f0; }
.item.active span { margin-top: 0; }
.item.dim svg { opacity: .9; }
.pair { display: flex; flex-direction: column; gap: 5px; height: 69px; padding-right: 1px; border-right: 1px solid #d0d3dc; }
.pair button { width: 20px; height: 18px; border: 1px solid #5f86b5; background: #c8dcf3; }
.pair svg { width: 18px; height: 14px; }

.work { flex: 1; display: flex; min-height: 0; }
.left, .right { flex: none; display: flex; flex-direction: column; width: 73px; padding: 1px 0 3px 2px; background: #f4f3f7; border-right: 1px solid #8fa0b6; }
.right { width: 67px; padding: 0 0 0 1px; border: 0; border-left: 1px solid #8fa0b6; background: #fafbfd; }
.nav { flex: none; display: flex; height: 17px; border: 1px solid #8a93a3; background: #eceef7; }
.nav button { flex: 1; display: flex; align-items: center; justify-content: center; }
.nav .end { flex: none; width: 22px; border-left: 1px solid #8a93a3; }
.right .nav .end { width: 24px; border-left: 0; border-right: 1px solid #8a93a3; }
.tri { width: 0; height: 0; border: 10px solid transparent; }
.tri.up { border-top: 0; border-bottom: 11px solid #849ab5; }
.tri.down { border-bottom: 0; border-top: 11px solid #849ab5; }
.tri.capped { position: relative; border-left-width: 7px; border-right-width: 7px; }
.tri.up.capped { border-bottom-width: 7px; margin-top: 5px; }
.tri.down.capped { border-top-width: 7px; margin-bottom: 5px; }
.tri.capped::after { content: ""; position: absolute; left: -7px; width: 14px; height: 2px; background: #849ab5; }
.tri.up.capped::after { top: -4px; }
.tri.down.capped::after { bottom: -4px; }
.tiles { flex: 16 1 0; display: flex; flex-direction: column; min-height: 0; border-left: 1px solid #8a93a3; }
.ten { flex: 10 1 0; }
.five { flex: 5 1 0; }
.tile { flex: 1 1 0; min-height: 0; display: flex; align-items: stretch; font-family: "Liberation Sans", Arial, sans-serif; }
.face { position: relative; flex: 1; display: flex; flex-direction: column; align-items: center; padding-top: 4px; background: #e8eaf4; border-top: 2px solid #8a93a3; border-right: 1px solid #b6bfcd; overflow: hidden; }
.face .fm { width: 41px; height: 30px; margin-bottom: 2px; }
.face .tl { width: 16px; height: 31px; margin-bottom: 1px; }
.face em { font-style: normal; font-size: 12px; line-height: 14px; color: #333; }
.num { flex: none; display: flex; flex-direction: column; align-items: center; justify-content: center; width: 12px; background: #849ab5; clip-path: polygon(0 0, 3px 0, 100% 8px, 100% calc(100% - 8px), 3px 100%, 0 100%); color: #1e2f48; }
.num b { width: 7px; font-size: 12px; line-height: 12px; font-weight: 400; overflow-wrap: anywhere; }
.num u { width: 7px; margin-top: 2px; border-top: 1px dotted #1e2f48; }
.right .num { width: 13px; clip-path: polygon(10px 0, 100% 0, 100% 100%, 10px 100%, 0 calc(100% - 8px), 0 8px); }
.right .tiles { border: 0; }
.right .face { align-items: flex-start; padding: 0; border-right: 0; border-left: 1px solid #b6bfcd; }
.face strong { position: absolute; left: 20px; top: 1px; width: 20px; height: 14px; border: 1px solid #8f97a5; background: #fff; font-size: 12px; line-height: 13px; font-weight: 400; text-align: center; white-space: nowrap; }
.op { flex: none; width: 53px; height: 50px; font-family: "Liberation Sans", Arial, sans-serif; }
.blank { flex: none; height: 39px; margin-bottom: 7px; border: 1px solid #8a93a3; border-top: 0; background: #f5f2f4; }
.clear { flex: none; height: 35px; padding: 4px; border: 1px solid #8a93a3; border-bottom: 0; background: #fdfdfe; }
.clear button { width: 60px; height: 22px; background: #bccbdf; font-size: 16px; line-height: 22px; color: #4e607b; }
.modes { flex: none; display: flex; align-items: center; gap: 2px; height: 28px; padding: 0 0 3px 3px; }
.modes svg { width: 14px; height: 14px; }
.modes .on { border: 1px solid #3b86c8; background: #c4e1fa; padding: 1px 0; }
.tail { flex: none; height: 38px; background: #e9eaf4; }

.viewport { position: relative; flex: 1; min-width: 0; background: linear-gradient(110deg, #0a3866 0%, #083768 50%, #043e76 100%); }
.scene { width: 100%; height: 100%; }
.top { fill: #c3bebf; }
.dark { fill: #4b4748; }
.white { fill: #fefcfe; }
.box { fill: none; stroke: #86acd2; stroke-width: 3; }
.faint { stroke: #4b78a6; }
.ridge { fill: none; stroke: #cfcccd; stroke-width: 3; }
.bars { position: absolute; left: 3px; right: 0; top: 10px; display: flex; justify-content: center; gap: 30px; }
.bar { display: flex; align-items: center; height: 26px; padding: 0 3px; border-radius: 3px; background: #7591b3; }
.mini { width: 20px; height: 20px; margin-right: 1px; border: 1px solid transparent; }
.mini svg { width: 18px; height: 18px; }
.mini.framed { border-color: #345a87; background: #86a5c8; }
.bar .caret { margin: 0 2px 0 1px; border-top-color: #27405f; }
.doit { position: absolute; left: 1px; top: 612px; display: flex; width: 74px; height: 103px; background: #7d97b9; font-size: 12px; line-height: 14px; color: #5d789c; }
.acts { flex: 1; display: flex; flex-direction: column; gap: 8px; padding-top: 6px; }
.acts svg { width: 28px; height: 28px; margin: 0 auto; }
.opts { width: 22px; display: flex; flex-direction: column; gap: 2px; background: #8aa3c3; }
.opts button { height: 21px; padding: 1px; border: 1px solid transparent; }
.opts .on { border-color: #3c5f8c; }
.opts svg { width: 18px; height: 16px; }

.status { flex: none; display: flex; align-items: center; justify-content: flex-end; height: 26px; padding-right: 2px; background: #f3f1f4; border-top: 1px solid #b9cde2; font-family: "Liberation Sans", Arial, sans-serif; font-size: 11px; line-height: 18px; }
.stop { width: 18px; height: 18px; margin-right: 4px; }
.progress { width: 157px; height: 8px; margin: 10px 5px 0 0; border: 2px solid #85898f; background: #dbe5ea; }
.pin { width: 12px; height: 10px; margin-right: 7px; }
.trash { width: 14px; height: 18px; margin-right: 6px; }
.cell { display: flex; align-items: center; justify-content: center; gap: 3px; height: 20px; margin-right: 3px; border: 1px solid #bdbbc0; border-right-color: #fff; border-bottom-color: #fff; }
.cs, .wg, .mm { font-family: "Liberation Mono", monospace; font-size: 10px; }
.cs { width: 33px; }
.wg { width: 49px; }
.wg svg { width: 15px; height: 12px; }
.mm { width: 50px; font-weight: 700; }
.part { width: 84px; justify-content: flex-start; padding-left: 2px; margin-right: 2px; font-size: 12px; }
.aim { width: 20px; margin-right: 0; }
.aim svg { width: 16px; height: 16px; }

.history { position: absolute; left: 57px; top: 23px; width: 142px; border: 1px solid #c9cbd3; background: #fcfbfd; color: #2b2b2e; }
.history ul { list-style: none; margin: 0; padding: 4px 0 6px; }
.history li { height: 23px; }
.history button { display: block; width: 100%; padding-left: 9px; line-height: 23px; text-align: left; white-space: nowrap; font-size: 12px; }
.history p { margin: 0; padding-left: 4px; background: #d6d3d5; line-height: 28px; font-size: 12px; }
.cursor { position: absolute; left: 79px; top: 12px; width: 12px; height: 19px; }
</style>
